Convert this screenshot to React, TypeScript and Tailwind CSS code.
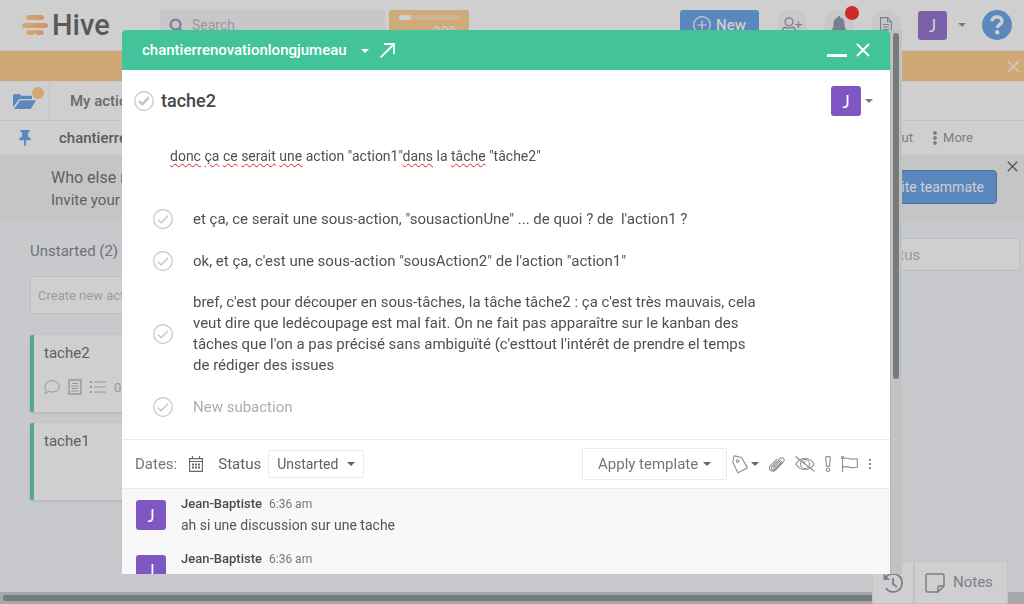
import type { ReactNode } from "react";

function Caret({ className }: { className: string }) {
  return (
    <svg viewBox="0 0 8 4" width="8" height="4" className={className} aria-hidden="true">
      <path d="M0 0h8L4 4z" fill="currentColor" />
    </svg>
  );
}

function Cross({ size, className, width = 2 }: { size: number; className?: string; width?: number }) {
  return (
    <svg viewBox="0 0 14 14" width={size} height={size} className={className} aria-hidden="true">
      <path d="M1 1l12 12M13 1L1 13" stroke="currentColor" strokeWidth={width} fill="none" />
    </svg>
  );
}

function HiveMark() {
  return (
    <svg viewBox="0 0 26 20" width="26" height="20" aria-hidden="true">
      <defs>
        <linearGradient id="hive" x1="0" x2="1">
          <stop offset="0" stopColor="#d0a876" />
          <stop offset="1" stopColor="#d09468" />
        </linearGradient>
      </defs>
      <g fill="url(#hive)">
        <path d="M6.500 0h13a2.500 2.500 0 0 1 0 5h-13a2.500 2.500 0 0 1 0-5z" />
        <path d="M2.500 8h21a2.500 2.500 0 0 1 0 5h-21a2.500 2.500 0 0 1 0-5z" />
        <path d="M6.500 15.300h13a2.300 2.300 0 0 1 0 4.700h-4c-.6 0-.6-1.600-2.500-1.600s-1.900 1.600-2.500 1.600h-4a2.300 2.300 0 0 1 0-4.700z" />
      </g>
    </svg>
  );
}

function CheckRing({ bold = false }: { bold?: boolean }) {
  return (
    <svg viewBox="0 0 20 20" width="20" height="20" fill="none" stroke="#c4c4c4" aria-hidden="true">
      <circle cx="10" cy="10" r="9.300" strokeWidth="1.200" />
      <path d={bold ? "M5 10.200l3.200 3.200 6.600-7" : "M4.800 10.600l3.400 3.200 6.800-7"} strokeWidth={bold ? 2.400 : 1.300} />
    </svg>
  );
}

function Avatar({ size = "h-[30px] w-[30px]", tone = "bg-[#7e57c2] text-white" }: { size?: string; tone?: string }) {
  return (
    <span className={`${size} ${tone} flex shrink-0 items-center justify-center rounded-[3px] font-[Lato,sans-serif] text-[17px] leading-none`}>
      J
    </span>
  );
}

function RoundButton({ label, children }: { label: string; children: ReactNode }) {
  return (
    <button type="button" aria-label={label} className="flex h-[30px] w-[30px] shrink-0 items-center justify-center rounded-full bg-[#c8c8ca] text-[#7a7f8d]">
      {children}
    </button>
  );
}

function TopBar() {
  return (
    <header className="flex h-[51px] items-center border-b border-[#c2c3c5] bg-[#cfcfcf] pr-3 pl-[22px]">
      <a href="#home" aria-label="Hive" className="flex w-[138px] shrink-0 items-center gap-1 text-[29px] leading-none font-medium text-[#595959]">
        <HiveMark />
        Hive
      </a>
      <label className="flex h-[30px] w-[225px] shrink-0 items-center gap-2 rounded-[3px] bg-[#c7c7ca] pl-[9px] text-[#7d8396]">
        <svg viewBox="0 0 16 16" width="15" height="15" fill="none" stroke="currentColor" strokeWidth="2.400" aria-hidden="true">
          <circle cx="7" cy="7" r="5.300" />
          <path d="M11 11l4 4" />
        </svg>
        <input type="search" aria-label="Search" placeholder="Search" className="w-40 bg-transparent text-sm outline-none placeholder:text-[#98989b]" />
      </label>
      <div className="ml-1 flex h-[30px] w-20 shrink-0 flex-col items-end rounded-[3px] bg-[#cfab79] px-[10px] pt-[5px]">
        <div className="h-[6px] w-full rounded-full bg-[#cfb491]">
          <div className="h-full w-3 rounded-full bg-[#d0d0d0]" />
        </div>
        <span className="mt-1 text-sm leading-4 font-medium text-[#d0cac0]">20%</span>
      </div>
      <div className="ml-auto flex items-center">
        <button type="button" className="flex h-[30px] w-[79px] items-center gap-[5px] rounded-[3px] bg-[#5a88bd] pl-[13px] text-[15px] font-medium text-[#cfcfcf]">
          <svg viewBox="0 0 18 18" width="18" height="18" fill="none" stroke="currentColor" strokeWidth="1.200" aria-hidden="true">
            <circle cx="9" cy="9" r="8.300" />
            <path d="M9 4.500v9M4.500 9h9" />
          </svg>
          New
        </button>
        <div className="ml-[18px] flex gap-[17px]">
          <RoundButton label="Invite people">
            <svg viewBox="0 0 20 16" width="20" height="16" fill="none" stroke="currentColor" strokeWidth="1.200" aria-hidden="true">
              <circle cx="7" cy="4.800" r="4" />
              <path d="M.6 16v-2.500q0-2.800 3-3.300c1.400 1.300 5.400 1.300 6.800 0q3 .5 3 3.300V16M16.500 4.500v6.500M13.300 7.700h6.500" />
            </svg>
          </RoundButton>
          <div className="relative">
            <RoundButton label="Notifications">
              <svg viewBox="0 0 16 18" width="16" height="18" fill="currentColor" aria-hidden="true">
                <path d="M8 0c.9 0 1.300.7 1.300 1.500C12.300 2.200 13.500 4.600 13.500 8c0 3.500.8 5 2.300 6.500H.2C1.700 13 2.500 11.500 2.500 8c0-3.400 1.200-5.800 4.200-6.500C6.700.7 7.100 0 8 0zM6 16h4q-.5 2-2 2t-2-2z" />
              </svg>
            </RoundButton>
            <span className="absolute -top-1 left-[21px] h-[14px] w-[14px] rounded-full bg-[#cc2b29]" />
          </div>
          <RoundButton label="Documents">
            <svg viewBox="0 0 12 17" width="12" height="17" fill="none" stroke="currentColor" strokeWidth="1.100" aria-hidden="true">
              <path d="M.6.600h7l3.800 4v11.800H.6zM7.500.800v4h3.800M3 7.500h6M3 10h6M3 12.500h6" />
            </svg>
          </RoundButton>
        </div>
        <button type="button" aria-label="Account" className="ml-[17px] flex items-center gap-[11px]">
          <Avatar size="h-[29px] w-[29px]" tone="bg-[#7b62a8] text-[#d0d0d0]" />
          <Caret className="text-[#7b7b7b]" />
        </button>
        <button type="button" aria-label="Help" className="ml-4 flex h-[30px] w-[30px] items-center justify-center rounded-full bg-[#5a88bd] text-[#cfcfcf]">
          <svg viewBox="0 0 14 20" width="14" height="20" fill="none" aria-hidden="true">
            <path d="M2 6.200C2.300 3.400 4.200 2 7 2c3 0 5 1.600 5 4 0 3.600-4.700 3.300-4.700 7" stroke="currentColor" strokeWidth="3.400" />
            <circle cx="7.200" cy="17.200" r="2.200" fill="currentColor" />
          </svg>
        </button>
      </div>
    </header>
  );
}

function CardIcons() {
  return (
    <div className="flex items-center gap-2 text-[13px] text-[#989898]">
      <svg viewBox="0 0 16 14" width="16" height="14" fill="none" stroke="currentColor" aria-hidden="true">
        <path d="M2.300 10.300C-.8 6 1.800.700 8 .700c4.200 0 7.300 2.400 7.300 5.700S12.200 12 8 12c-1.300 0-2.400-.2-3.500-.6-1 1-2 1.600-3.700 1.700 1-.8 1.500-1.700 1.500-2.800z" />
      </svg>
      <svg viewBox="0 0 14 16" width="14" height="16" fill="none" stroke="currentColor" aria-hidden="true">
        <path d="M1 1h12v14H1z" strokeWidth="1.400" />
        <path d="M4 4.500h6M3 7h8M4 9.500h6M3 12h8" />
      </svg>
      <svg viewBox="0 0 16 14" width="16" height="14" fill="none" stroke="currentColor" aria-hidden="true">
        <path d="M4 2h12M4 7h12M4 12h12" />
        <path d="M0 2h2M0 7h2M0 12h2" strokeWidth="2" />
      </svg>
      <span>0/4</span>
    </div>
  );
}

function Board() {
  return (
    <main className="flex flex-1 justify-between bg-[#c8c9cd] pt-4 pr-[4px] pl-[30px]">
      <section className="w-[300px]">
        <h2 className="pt-[3px] text-[15px] leading-5 text-[#707174]">Unstarted (2)</h2>
        <input
          aria-label="Create new action"
          placeholder="Create new action"
          className="mt-[15px] h-[38px] w-full rounded-[2px] border border-[#bcbdbe] bg-[#cfcfcf] px-[7px] text-[13px] outline-none placeholder:text-[#9c9c9c]"
        />
        <article className="mt-[21px] flex h-[77px] flex-col justify-between rounded-[2px] border-l-4 border-[#55a98a] bg-[#cfcfcf] pt-2 pb-[15px] pl-[10px] shadow">
          <h3 className="text-[15px] leading-5 text-[#5e5e5e]">tache2</h3>
          <CardIcons />
        </article>
        <article className="mt-[11px] h-[77px] rounded-[2px] border-l-4 border-[#55a98a] bg-[#cfcfcf] pt-2 pl-[10px] shadow">
          <h3 className="text-[15px] leading-5 text-[#5e5e5e]">tache1</h3>
        </article>
      </section>
      <input aria-label="Add status" placeholder="Add status" className="h-[33px] w-[180px] border border-[#bcbdbe] bg-[#cfcfcf] pl-[7px] text-[15px] outline-none placeholder:text-[#989898]" />
    </main>
  );
}

function Workspace() {
  return (
    <div className="flex min-h-screen flex-col">
      <TopBar />
      <div className="flex h-[31px] items-center justify-end border-b border-[#c8c8c8] bg-[#cfa878] pr-1">
        <button type="button" aria-label="Close notice" className="text-[#d0cdc8]">
          <Cross size={13} width={1.500} />
        </button>
      </div>
      <nav className="flex h-[39px] items-stretch border-b border-[#c3c3c4] bg-[#cfcfcf]">
        <a href="#projects" aria-label="Projects" className="relative flex w-[50px] items-center border-r border-[#c3c3c4] pl-[13px]">
          <svg viewBox="0 0 23 15" width="23" height="15" fill="#5b89be" aria-hidden="true">
            <path d="M0 1.500Q0 0 1.500 0h4.700q1 0 1.500 1l.4.800h9.400Q19 1.800 19 3.200V5H7.500Q6 5 5.200 6.300L0 13.500z" />
            <path d="M8 6.200h15L18.500 14q-.6 1-2 1H1.200L6.500 7q.5-.8 1.500-.8z" />
          </svg>
          <span className="absolute top-[5px] right-[5px] h-3 w-3 rounded-full bg-[#d0a874]" />
        </a>
        <a href="#mine" className="flex items-center pl-5 text-[15px] font-medium text-[#6a6a6a]">My actions</a>
      </nav>
      <div className="flex h-[34px] items-center bg-[#cfcfcf] pr-[51px] pl-[19px]">
        <svg viewBox="0 0 12 16" width="12" height="16" fill="#5b89be" aria-hidden="true">
          <path d="M1.500 0h9v1.800L9 2.500v4.300c1.900.6 3 1.700 3 3.400H7V15l-1 1-1-1v-4.800H0c0-1.700 1.100-2.800 3-3.400V2.500l-1.500-.7z" />
        </svg>
        <h1 className="ml-7 text-[15px] font-medium text-[#5c5c5c]">chantierrenovationlongjumeau</h1>
        <div className="ml-auto flex gap-5 text-[13px] text-[#7a7d86]">
          <button type="button">Layout</button>
          <button type="button" className="flex items-center gap-[6px]">
            <svg viewBox="0 0 4 14" width="4" height="14" fill="currentColor" aria-hidden="true">
              <circle cx="2" cy="2" r="1.900" />
              <circle cx="2" cy="7" r="1.900" />
              <circle cx="2" cy="12" r="1.900" />
            </svg>
            More
          </button>
        </div>
      </div>
      <aside className="flex h-[67px] items-start bg-[#c5c5c5] pr-[6px] pl-[51px] text-[#606060]">
        <div className="pt-3">
          <p className="text-base leading-[22px]">Who else needs to see this project?</p>
          <p className="text-[15px] leading-[22px]">Invite your teammates to collaborate</p>
        </div>
        <button type="button" className="mt-[15px] ml-auto h-[34px] rounded-[4px] border border-[#46729f] bg-[#5a88bd] px-3 text-sm text-[#cfcfcf]">Invite teammate</button>
        <button type="button" aria-label="Dismiss invitation" className="mt-[6px] ml-[10px] text-[#555]">
          <Cross size={11} width={1.700} />
        </button>
      </aside>
      <Board />
      <div className="h-3 bg-[#a6a8a7] p-[3px]">
        <div className="h-[6px] w-[97%] rounded-full bg-[#767b7b]" />
      </div>
    </div>
  );
}

function Subaction({ children }: { children: ReactNode }) {
  return (
    <li className="flex min-h-[42px] items-center gap-5 py-[10px] pr-[115px]">
      <button type="button" aria-label="Complete subaction" className="shrink-0">
        <CheckRing />
      </button>
      {children}
    </li>
  );
}

function Typo({ children }: { children: string }) {
  return <span className="underline decoration-[#e02020] decoration-wavy decoration-1 underline-offset-2">{children}</span>;
}

function ToolIcons() {
  return (
    <div className="flex items-center text-[#8e8e8e]">
      <button type="button" aria-label="Labels" className="ml-[5px] flex items-center gap-[3px]">
        <svg viewBox="0 0 16 19" width="16" height="19" fill="none" stroke="currentColor" strokeWidth="1.100" strokeLinejoin="round" aria-hidden="true">
          <path d="M1.800 1.500q.2-.8 1-.6l6.700 1.600 5.600 9.600q.4.800-.4 1.200l-8.200 4.200q-.7.300-1-.4L.800 7.300z" />
          <circle cx="5.600" cy="6" r="1.300" />
        </svg>
        <Caret className="text-[#666]" />
      </button>
      <button type="button" aria-label="Attach file" className="ml-[10px]">
        <svg viewBox="0 0 16 16" width="16" height="16" fill="none" stroke="currentColor" strokeWidth="1.100" strokeLinecap="round" aria-hidden="true">
          <path d="M4.500 11.500l6.300-6.400q.8-.8 1.400-.1t-.1 1.500l-6.500 6.500c-2.200 2-4.300-.4-2.400-2.500l7.700-7.900C13.300.400 16.600 3.300 14.400 6l-7.800 8c-3.600 3.200-8-.7-5.200-4.300l6.300-6.400" />
        </svg>
      </button>
      <button type="button" aria-label="Hide" className="ml-[10px]">
        <svg viewBox="0 0 20 16" width="20" height="16" fill="none" stroke="currentColor" strokeWidth="1.100" aria-hidden="true">
          <path d="M.8 8C5.500.600 14.500.600 19.200 8 14.500 15.400 5.500 15.400.800 8zM.5.500l19 15" />
          <circle cx="10" cy="8" r="4.500" />
          <path d="M8 7.500q.5-2 2.500-2" />
        </svg>
      </button>
      <button type="button" aria-label="Priority" className="ml-[10px]">
        <svg viewBox="0 0 6 16" width="6" height="16" fill="none" stroke="currentColor" strokeWidth="1.100" aria-hidden="true">
          <path d="M1.500.600h3q.9 0 .8 1l-.8 8.500h-3L.700 1.600q-.1-1 .8-1z" />
          <circle cx="3" cy="13.700" r="1.700" />
        </svg>
      </button>
      <button type="button" aria-label="Flag" className="ml-[10px]">
        <svg viewBox="0 0 17 16" width="17" height="16" fill="none" stroke="currentColor" strokeWidth="1.100" aria-hidden="true">
          <path d="M1.500 2.500V16M2 2.500c4-2.200 7 2.200 14.300.2v8.600C9 13.300 6 9 2 11.200" />
          <circle cx="1.500" cy="1.500" r="1" />
        </svg>
      </button>
      <button type="button" aria-label="More options" className="ml-[10px]">
        <svg viewBox="0 0 4 12" width="4" height="12" fill="currentColor" aria-hidden="true">
          <path d="M1 1h2v2H1zM1 5h2v2H1zM1 9h2v2H1z" />
        </svg>
      </button>
    </div>
  );
}

function Message({ text }: { text?: string }) {
  return (
    <li className="flex h-[55px] gap-[15px]">
      <Avatar />
      <div className="-mt-1">
        <p className="flex items-baseline gap-[7px] text-[13px] leading-4">
          <strong className="font-medium text-[#4a4a4a]">Jean-Baptiste</strong>
          <time className="text-xs text-[#777]">6:36 am</time>
        </p>
        {text && <p className="mt-[3px] text-sm leading-5 text-[#555]">{text}</p>}
      </div>
    </li>
  );
}

function ActionDialog() {
  return (
    <div className="fixed inset-x-0 top-[30px] bottom-[30px] mx-auto flex max-w-[780px]">
      <section role="dialog" aria-label="tache2" className="flex min-w-0 flex-1 flex-col overflow-hidden rounded-t-[4px] bg-white">
        <header className="flex h-10 shrink-0 items-center bg-[#43c39a] px-5 text-white">
          <button type="button" className="flex items-center gap-[14px] text-[15px] leading-5 font-medium">
            chantierrenovationlongjumeau
            <Caret className="mt-[2px]" />
          </button>
          <button type="button" aria-label="Open full page" className="ml-[11px]">
            <svg viewBox="0 0 15 15" width="15" height="15" fill="none" stroke="currentColor" strokeWidth="1.800" aria-hidden="true">
              <path d="M.6 14.400L14 1M4 1h10v10" />
            </svg>
          </button>
          <button type="button" aria-label="Minimise" className="ml-auto flex h-5 w-5 items-end pb-[3px]">
            <span className="h-[3px] w-full bg-white" />
          </button>
          <button type="button" aria-label="Close" className="ml-[9px]">
            <Cross size={14} width={2} />
          </button>
        </header>
        <div className="flex h-[62px] shrink-0 items-center pr-[17px] pl-3">
          <button type="button" aria-label="Complete action">
            <CheckRing bold />
          </button>
          <h2 className="ml-[7px] text-lg font-medium text-[#474747]">tache2</h2>
          <button type="button" aria-label="Assignee" className="ml-auto flex items-center gap-1">
            <Avatar />
            <Caret className="text-[#777]" />
          </button>
        </div>
        <p className="h-[66px] shrink-0 pt-[14px] pl-12 text-sm leading-5 text-[#505050]">
          <Typo>donc</Typo> <Typo>ça</Typo> <Typo>ce</Typo> <Typo>serait</Typo> <Typo>une</Typo> action "action1"<Typo>dans</Typo> la <Typo>tâche</Typo> "tâche2"
        </p>
        <ul className="shrink-0 pb-[11px] pl-[31px] text-[15px] leading-[21px] text-[#505050]">
          <Subaction>
            <p>et ça, ce serait une sous-action, "sousactionUne" ... de quoi ? de &nbsp;l'action1 ?</p>
          </Subaction>
          <Subaction>
            <p>ok, et ça, c'est une sous-action "sousAction2" de l'action "action1"</p>
          </Subaction>
          <Subaction>
            <p>
              bref, c'est pour découper en sous-tâches, la tâche tâche2 : ça c'est très mauvais, cela<br />
              veut dire que ledécoupage est mal fait. On ne fait pas apparaître sur le kanban des<br />
              tâches que l'on a pas précisé sans ambiguïté (c'esttout l'intérêt de prendre el temps<br />
              de rédiger des issues
            </p>
          </Subaction>
          <Subaction>
            <input aria-label="New subaction" placeholder="New subaction" className="h-5 flex-1 outline-none placeholder:text-[#adadad]" />
          </Subaction>
        </ul>
        <div className="flex h-[50px] shrink-0 items-center border-y border-[#ebebeb] pr-[18px] pl-[13px] text-[15px] text-[#616161]">
          <button type="button" className="flex items-center gap-3 text-[#777]">
            Dates:
            <svg viewBox="0 0 14 16" width="14" height="16" fill="none" stroke="#666" aria-hidden="true">
              <path d="M.6 2.600h12.800v12.800H.6zM.6 5.500h12.800M3.500 0v2.500M10.500 0v2.500" strokeWidth="1.100" />
              <path d="M3 8.500h8M3 11.500h8" strokeWidth="2" strokeDasharray="2 1" />
            </svg>
          </button>
          <label htmlFor="status" className="ml-[15px]">Status</label>
          <div className="ml-[7px] grid h-7 w-24 items-center rounded-[2px] border border-[#ebebeb]">
            <select id="status" className="col-start-1 row-start-1 h-full w-full appearance-none bg-transparent pl-2 text-sm outline-none">
              <option>Unstarted</option>
              <option>In progress</option>
              <option>Completed</option>
            </select>
            <Caret className="pointer-events-none col-start-1 row-start-1 mr-2 justify-self-end" />
          </div>
          <button type="button" className="ml-auto flex h-8 w-[145px] items-center justify-between border border-[#ebebeb] px-[15px] text-[#757575]">
            Apply template
            <Caret className="text-[#666]" />
          </button>
          <ToolIcons />
        </div>
        <ul className="min-h-0 flex-1 overflow-hidden bg-[#f8f8f8] pt-[11px] pl-[14px]">
          <Message text="ah si une discussion sur une tache" />
          <Message />
        </ul>
      </section>
      <div className="w-3 shrink-0 border-l border-[#b3b5b4] bg-[#c1c3c2] pt-[3px] pl-[2px]">
        <div className="h-[64%] w-[6px] rounded-full bg-[#767b7b]" />
      </div>
    </div>
  );
}

function Dock() {
  return (
    <div className="fixed right-4 bottom-0 flex h-[43px] border border-[#c1c1c1] bg-[#cfcfcf] text-[#7a7f8d]">
      <button type="button" aria-label="History" className="flex w-[42px] items-center justify-center border-r-2 border-[#c1c1c1]">
        <svg viewBox="0 0 20 20" width="20" height="20" fill="none" stroke="currentColor" strokeWidth="1.800" aria-hidden="true">
          <path d="M2 5.500C7-2.500 19 .500 19 10c0 9-11 12-16.200 5M10 5v6l4 3" />
          <path d="M.5.500V7H7z" fill="currentColor" stroke="none" />
        </svg>
      </button>
      <button type="button" className="flex w-[92px] items-center gap-2 pl-[10px] text-[15px]">
        <svg viewBox="0 0 20 20" width="20" height="20" fill="none" stroke="currentColor" strokeWidth="1.500" aria-hidden="true">
          <path d="M13 19H2.500Q1 19 1 17.500v-15Q1 1 2.500 1h15Q19 1 19 2.500V13l-6 6v-4.500q0-1.500 1.500-1.500H19" />
        </svg>
        Notes
      </button>
    </div>
  );
}

export default function App() {
  return (
    <div className="font-[Roboto,sans-serif]">
      <Workspace />
      <Dock />
      <ActionDialog />
    </div>
  );
}
